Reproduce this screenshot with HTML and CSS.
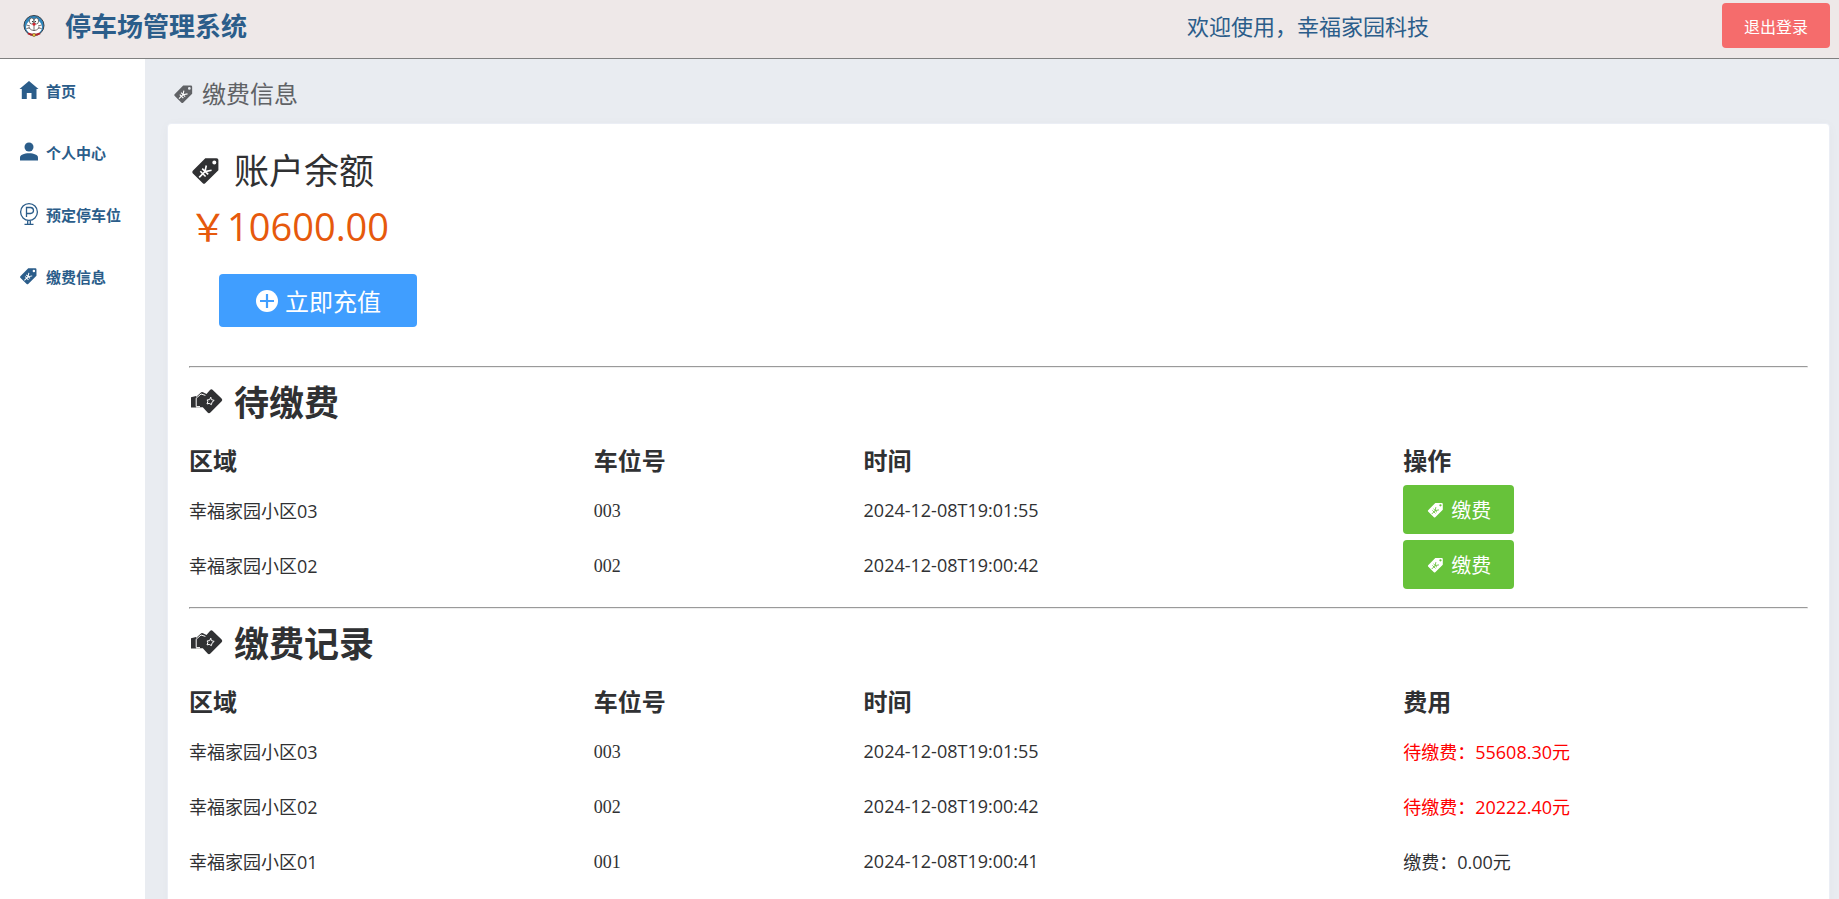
FILE: index.html
```html
<!DOCTYPE html>
<html lang="zh-CN">
<head>
  <meta charset="UTF-8">
  <title>停车场管理系统</title>
  <link rel="stylesheet" href="styles.css">
</head>
<body>
  <!-- shared icons -->
  <svg class="sprite" aria-hidden="true">
    <symbol id="icon-tag" viewBox="0 0 35 35">
      <path fill="currentColor" fill-rule="evenodd" d="M16.3 5.2H27.5Q29.4 5.2 29.4 7V17.2L16.2 30.2Q15 31.2 13.8 30.2L3.7 20.2Q2.7 19 3.8 17.8ZM25.3 7.4a2 2 0 1 0 0 4a2 2 0 1 0 0-4Z"/>
      <path class="yen" d="M10.2 24.4L16 18.6L17.3 12.5M16 18.6L22.6 17.3M11.3 18.3L16.6 23.5M13.2 15.6L19.2 21.4"/>
    </symbol>
    <symbol id="icon-pay" viewBox="0 0 35 35">
      <path fill="currentColor" d="M2 12.2L7 11V22.6H2Z"/>
      <path fill="currentColor" d="M7 12L12.2 7.2Q13 6.7 14 7.2L17.5 9L21 5Q22.4 3.6 23.8 5L32.6 13.4Q34 14.8 32.6 16.2L21.4 27.6Q20 28.9 18.6 27.6L13.8 22.3H7Z"/>
      <path class="line" d="M7.2 21.5V13.2L12 9L16.4 10.4M7.2 21.6H11"/>
      <path class="star" d="M21.8 12.2L22.3 14.6L25.2 15.4L23 17.2L22.4 19.6L20.2 18.4L18 18.9L18.8 16.7L18.2 14.9L20.5 14.7Z"/>
    </symbol>
    <symbol id="icon-home" viewBox="0 0 22 22">
      <path fill="currentColor" d="M11 2L20.5 10H18.5V20H13.5V14H8.8V20H3.8V10H1.5Z"/>
    </symbol>
    <symbol id="icon-user" viewBox="0 0 22 22">
      <circle cx="11" cy="6" r="4.5" fill="currentColor"/>
      <path fill="currentColor" d="M2 19.5V16.5C2 13.8 6 12.2 11 12.2S20 13.8 20 16.5V19.5Z"/>
    </symbol>
    <symbol id="icon-parking" viewBox="0 0 22 24">
      <circle cx="11" cy="10" r="8.4" fill="none" stroke="currentColor" stroke-width="1.3"/>
      <path fill="none" stroke="currentColor" stroke-width="1.3" d="M8.5 15V5.5H12.5Q15.5 5.8 15.5 8.5T12.5 11.5H8.5M9.7 18.5V22M12.3 18.5V22M6.5 22.3H15.5"/>
    </symbol>
    <symbol id="icon-plus" viewBox="0 0 24 24">
      <circle cx="12" cy="12" r="11" fill="currentColor"/>
      <path d="M12 5V19M5 12H19" fill="none" stroke="#409eff" stroke-width="2.2"/>
    </symbol>
  </svg>

  <header class="header">
    <div class="brand">
      <svg class="logo" viewBox="0 0 22 22">
        <circle cx="11" cy="10.5" r="10" fill="#2e86bd" stroke="#3a3f47" stroke-width="1"/>
        <ellipse cx="11" cy="12" rx="8" ry="7.6" fill="#fff"/>
        <ellipse cx="8.7" cy="6" rx="2.3" ry="3" fill="#fff" stroke="#444" stroke-width="0.7"/>
        <ellipse cx="13.3" cy="6" rx="2.3" ry="3" fill="#fff" stroke="#444" stroke-width="0.7"/>
        <circle cx="9.6" cy="6.6" r="0.7" fill="#222"/>
        <circle cx="12.4" cy="6.6" r="0.7" fill="#222"/>
        <circle cx="11" cy="9.2" r="1.5" fill="#d4212b"/>
        <path d="M11 10.5V15.6M5.5 12.3Q11 19 16.5 12.3M3.5 10L7 11M3.5 13.5L7 12.8M18.5 10L15 11M18.5 13.5L15 12.8" fill="none" stroke="#54494b" stroke-width="0.8"/>
        <path d="M5 18.3Q11 21.3 17 18.3" fill="none" stroke="#b3232d" stroke-width="2"/>
        <circle cx="11" cy="20" r="1.6" fill="#e8c33b" stroke="#5f4a22" stroke-width="0.5"/>
      </svg>
      <h1>停车场管理系统</h1>
    </div>
    <div class="welcome">欢迎使用，幸福家园科技</div>
    <button type="button" class="btn btn-logout">退出登录</button>
  </header>

  <div class="layout">
    <nav class="sidebar">
      <a href="#"><svg class="nav-icon"><use href="#icon-home"/></svg>首页</a>
      <a href="#"><svg class="nav-icon"><use href="#icon-user"/></svg>个人中心</a>
      <a href="#"><svg class="nav-icon nav-icon-tall"><use href="#icon-parking"/></svg>预定停车位</a>
      <a href="#"><svg class="nav-icon"><use href="#icon-tag"/></svg>缴费信息</a>
    </nav>

    <main class="main">
      <h2 class="page-title"><svg><use href="#icon-tag"/></svg>缴费信息</h2>

      <div class="card">
        <section>
          <h3 class="account-title"><svg><use href="#icon-tag"/></svg>账户余额</h3>
          <p class="balance">￥10600.00</p>
          <button type="button" class="btn btn-recharge"><svg><use href="#icon-plus"/></svg>立即充值</button>
        </section>

        <section class="bills">
          <hr>
          <h3><svg><use href="#icon-pay"/></svg>待缴费</h3>
          <table>
            <thead>
              <tr><th class="area">区域</th><th class="number">车位号</th><th class="time">时间</th><th>操作</th></tr>
            </thead>
            <tbody>
              <tr>
                <td>幸福家园小区03</td>
                <td class="code">003</td>
                <td>2024-12-08T19:01:55</td>
                <td><button type="button" class="btn btn-pay"><svg><use href="#icon-tag"/></svg>缴费</button></td>
              </tr>
              <tr>
                <td>幸福家园小区02</td>
                <td class="code">002</td>
                <td>2024-12-08T19:00:42</td>
                <td><button type="button" class="btn btn-pay"><svg><use href="#icon-tag"/></svg>缴费</button></td>
              </tr>
            </tbody>
          </table>
        </section>

        <section class="bills">
          <hr>
          <h3><svg><use href="#icon-pay"/></svg>缴费记录</h3>
          <table>
            <thead>
              <tr><th class="area">区域</th><th class="number">车位号</th><th class="time">时间</th><th>费用</th></tr>
            </thead>
            <tbody>
              <tr>
                <td>幸福家园小区03</td>
                <td class="code">003</td>
                <td>2024-12-08T19:01:55</td>
                <td class="unpaid">待缴费：55608.30元</td>
              </tr>
              <tr>
                <td>幸福家园小区02</td>
                <td class="code">002</td>
                <td>2024-12-08T19:00:42</td>
                <td class="unpaid">待缴费：20222.40元</td>
              </tr>
              <tr>
                <td>幸福家园小区01</td>
                <td class="code">001</td>
                <td>2024-12-08T19:00:41</td>
                <td>缴费：0.00元</td>
              </tr>
            </tbody>
          </table>
        </section>
      </div>
    </main>
  </div>
</body>
</html>
```
FILE: styles.css
```css
* {
  box-sizing: border-box;
}

body {
  margin: 0;
  height: 100vh;
  display: flex;
  flex-direction: column;
  overflow: hidden;
  font-family: "Open Sans", "Noto Sans CJK SC", sans-serif;
  font-size: 18px;
  color: #303133;
  background: #e9ecf1;
}

h1, h2, h3, p {
  margin: 0;
}

svg {
  flex: none;
}

.sprite {
  position: absolute;
  width: 0;
  height: 0;
}

/* header */
.header {
  display: grid;
  grid-template-columns: 1fr 535px auto;
  align-items: start;
  flex: none;
  height: 59px;
  padding: 0 9px 0 23px;
  background: #eee8e8;
  border-bottom: 1px solid #808080;
  color: #2b5d8a;
}

.brand {
  display: flex;
  align-items: center;
  gap: 20px;
}

.logo {
  width: 22px;
  height: 22px;
}

.brand h1 {
  font-size: 26px;
  line-height: 52px;
}

.welcome {
  font-size: 22px;
  line-height: 52px;
}

/* buttons */
.btn {
  display: inline-flex;
  align-items: center;
  justify-content: center;
  border: none;
  border-radius: 4px;
  font-family: inherit;
  color: #fff;
  cursor: pointer;
}

.btn-logout {
  height: 45px;
  margin-top: 3px;
  padding: 0 22px;
  font-size: 16px;
  background: #f56c6c;
}

.btn-recharge {
  gap: 6px;
  height: 53px;
  margin: 18px 0 39px 30px;
  padding: 0 36px;
  font-size: 24px;
  background: #409eff;
}

.btn-recharge svg {
  width: 24px;
  height: 24px;
}

.btn-pay {
  --yen: #67c23a;
  gap: 5px;
  height: 49px;
  padding: 0 23px;
  font-size: 20px;
  background: #67c23a;
  vertical-align: middle;
}

.btn-pay svg {
  width: 20px;
  height: 20px;
}

/* sidebar */
.layout {
  display: flex;
  flex: 1;
  min-height: 0;
}

.sidebar {
  flex: none;
  width: 145px;
  background: #fff;
}

.sidebar a {
  display: flex;
  align-items: center;
  gap: 6px;
  height: 62px;
  padding-left: 18px;
  font-size: 15px;
  font-weight: bold;
  color: #2b5d8a;
  text-decoration: none;
}

.nav-icon {
  width: 22px;
  height: 22px;
}

.nav-icon-tall {
  height: 24px;
}

/* content */
.main {
  flex: 1;
  padding: 0 9px 20px 22px;
  overflow: auto;
  scrollbar-width: none;
}

.page-title {
  display: flex;
  align-items: center;
  gap: 6px;
  height: 64px;
  padding: 2px 0 0 5px;
  font-size: 24px;
  font-weight: normal;
  color: #606266;
}

.page-title svg {
  width: 24px;
  height: 24px;
  margin-top: 4px;
}

.card {
  min-height: 100%;
  padding: 20px 21px;
  background: #fff;
  border: 1px solid #ebeef5;
  border-radius: 4px;
  box-shadow: 0 2px 12px rgba(0, 0, 0, 0.03);
}

/* glyphs sit low in their line box, so the icon gets the extra space */
.card h3 {
  display: flex;
  align-items: center;
  gap: 10px;
  padding-bottom: 4px;
  font-size: 35px;
}

.card h3 svg {
  width: 35px;
  height: 35px;
  margin-top: 4px;
}

.card .account-title {
  height: 52px;
  font-weight: normal;
}

.balance {
  font-size: 38px;
  line-height: 60px;
  color: #e6590c;
}

.bills hr {
  margin: 0;
}

.bills h3 {
  height: 68px;
}

.bills table {
  width: 100%;
  margin-bottom: 15px;
  table-layout: fixed;
  border-collapse: collapse;
}

.bills th,
.bills td {
  height: 55px;
  padding: 0;
  text-align: left;
}

.bills th {
  height: 46px;
  padding-top: 3px;
  font-size: 24px;
  line-height: 30px;
}

.area {
  width: 25%;
}

.number {
  width: 16.6667%;
}

.time {
  width: 33.3333%;
}

.bills .code {
  padding-top: 4px;
  font-family: "Liberation Serif", serif;
}

.bills .unpaid {
  color: red;
}

.yen {
  fill: none;
  stroke: var(--yen, #fff);
  stroke-width: 1.6;
}

.line,
.star {
  fill: none;
  stroke: #fff;
  stroke-width: 1;
}
```
